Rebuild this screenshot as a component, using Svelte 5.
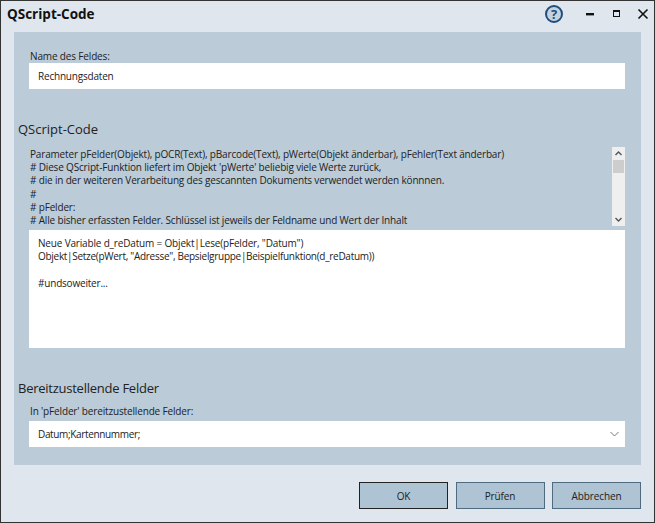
<script>
  const info = [
    "Parameter pFelder(Objekt), pOCR(Text), pBarcode(Text), pWerte(Objekt änderbar), pFehler(Text änderbar)",
    "# Diese QScript-Funktion liefert im Objekt 'pWerte' beliebig viele Werte zurück,",
    "# die in der weiteren Verarbeitung des gescannten Dokuments verwendet werden könnnen.",
    "#",
    "# pFelder:",
    "# Alle bisher erfassten Felder. Schlüssel ist jeweils der Feldname und Wert der Inhalt"
  ];
  const code = [
    { t: 'Neue Variable d_reDatum = Objekt|Lese(pFelder, "Datum")', ls: -0.17 },
    { t: 'Objekt|Setze(pWert, "Adresse", Bepsielgruppe|Beispielfunktion(d_reDatum))', ls: -0.29 },
    { t: '\u00a0', ls: 0 },
    { t: '#undsoweiter...', ls: -0.2 }
  ];
</script>

<div class="window">
  <header class="titlebar">
    <h1>QScript-Code</h1>
    <div class="controls">
      <svg class="help" width="20" height="20" viewBox="0 0 20 20">
        <circle cx="10" cy="10" r="8" fill="#c5d3e0" stroke="#1f4e7d" stroke-width="2"/>
        <text x="10" y="14.5" text-anchor="middle" class="q">?</text>
      </svg>
      <svg class="min" width="10" height="10" viewBox="0 0 10 10"><rect x="1" y="4" width="8" height="2.4" fill="#111"/></svg>
      <svg class="max" width="10" height="10" viewBox="0 0 10 10"><rect x="1.5" y="1.5" width="6" height="6" fill="none" stroke="#111"/><rect x="1" y="1" width="7" height="2" fill="#111"/></svg>
      <svg class="close" width="12" height="12" viewBox="0 0 12 12"><path d="M1.5 1.5 10.5 10.5M10.5 1.5 1.5 10.5" stroke="#111" stroke-width="1.6" fill="none"/></svg>
    </div>
  </header>

  <main class="panel">
    <div class="label first">Name des Feldes:</div>
    <div class="field name">Rechnungsdaten</div>

    <h2 class="code-head">QScript-Code</h2>
    <div class="info-wrap">
      <div class="info">
        {#each info as line}<div>{line}</div>{/each}
      </div>
      <div class="scrollbar">
        <svg width="13" height="13" viewBox="0 0 13 13"><path d="M3.5 8 6.5 5 9.5 8" stroke="#555" stroke-width="1.4" fill="none"/></svg>
        <div class="thumb"></div>
        <div class="track"></div>
        <svg width="13" height="13" viewBox="0 0 13 13"><path d="M3.5 5 6.5 8 9.5 5" stroke="#555" stroke-width="1.4" fill="none"/></svg>
      </div>
    </div>
    <div class="editor">
      {#each code as line}<div style="letter-spacing:{line.ls}px">{line.t}</div>{/each}
    </div>

    <h2 class="fields-head">Bereitzustellende Felder</h2>
    <div class="label second">In 'pFelder' bereitzustellende Felder:</div>
    <div class="field select">
      <span>Datum;Kartennummer;</span>
      <svg width="9" height="6" viewBox="0 0 9 6"><path d="M.5 1 4.5 5 8.5 1" stroke="#777" fill="none"/></svg>
    </div>
  </main>

  <footer class="buttons">
    <button class="primary">OK</button>
    <button>Prüfen</button>
    <button>Abbrechen</button>
  </footer>
</div>

<style>
  :global(body) { margin: 0; }
  .window {
    box-sizing: border-box;
    width: 655px;
    height: 523px;
    background: #dfe6ed;
    border: 1px solid #333;
    font-family: "Open Sans", "Noto Sans", sans-serif;
    font-size: 10px;
    color: #222;
    display: flex;
    flex-direction: column;
  }
  .titlebar {
    height: 31px;
    flex: none;
    display: flex;
    align-items: center;
    justify-content: space-between;
    padding: 0 0 5px 6px;
    box-sizing: border-box;
  }
  h1 {
    margin: 0;
    font-size: 13.5px;
    font-weight: 700;
    color: #111;
  }
  .controls { display: flex; align-items: center; }
  .help { margin-right: 21px; }
  .min { margin-right: 17px; }
  .max { margin-right: 15px; }
  .close { margin-right: 5px; }
  .q { font: 700 13px "Open Sans", sans-serif; fill: #1f4e7d; }
  .panel {
    margin: 0 13px;
    height: 433px;
    flex: none;
    background: #bbcbd8;
    padding: 0 16px 0 15px;
    box-sizing: border-box;
  }
  .label {
    line-height: 14px;
    color: #222;
    padding-left: 1px;
    letter-spacing: -0.15px;
  }
  .label.first { padding-top: 17px; }
  .label.second { margin-top: 7px; margin-bottom: 3px; }
  .field {
    height: 26px;
    background: #fff;
    line-height: 26px;
    padding-left: 9px;
    box-sizing: border-box;
  }
  .name { letter-spacing: -0.2px; }
  h2 {
    margin: 0;
    font-size: 13px;
    font-weight: 400;
    margin-left: -11px;
    line-height: 18px;
    color: #222;
  }
  .code-head { margin-top: 31px; }
  .info-wrap {
    display: flex;
    margin-top: 9px;
    height: 83px;
    justify-content: space-between;
  }
  .info { line-height: 13.2px; padding-top: 1px; padding-left: 1px; white-space: nowrap; letter-spacing: -0.17px; }
  .scrollbar {
    width: 13px;
    height: 79px;
    background: #efefef;
    display: flex;
    flex-direction: column;
    align-items: center;
  }
  .scrollbar svg { flex: none; }
  .thumb { width: 11px; height: 13px; background: #cdcdcd; flex: none; }
  .track { flex: 1; }
  .editor {
    height: 118px;
    background: #fff;
    padding: 7px 9px;
    line-height: 13.2px;
    box-sizing: border-box;
  }
  .fields-head { margin-top: 31px; letter-spacing: -0.25px; }
  .select {
    display: flex;
    align-items: center;
    justify-content: space-between;
    padding-right: 6px;
    letter-spacing: -0.35px;
  }
  .buttons {
    flex: 1;
    display: flex;
    justify-content: flex-end;
    gap: 7.5px;
    padding: 17px 13px 0 0;
  }
  button {
    width: 89px;
    height: 27px;
    background: #aec3d3;
    border: 1px solid #4f6b80;
    font: inherit;
    color: #222;
    padding: 0;
    letter-spacing: -0.1px;
  }
  .primary { border-color: #222; }
</style>
